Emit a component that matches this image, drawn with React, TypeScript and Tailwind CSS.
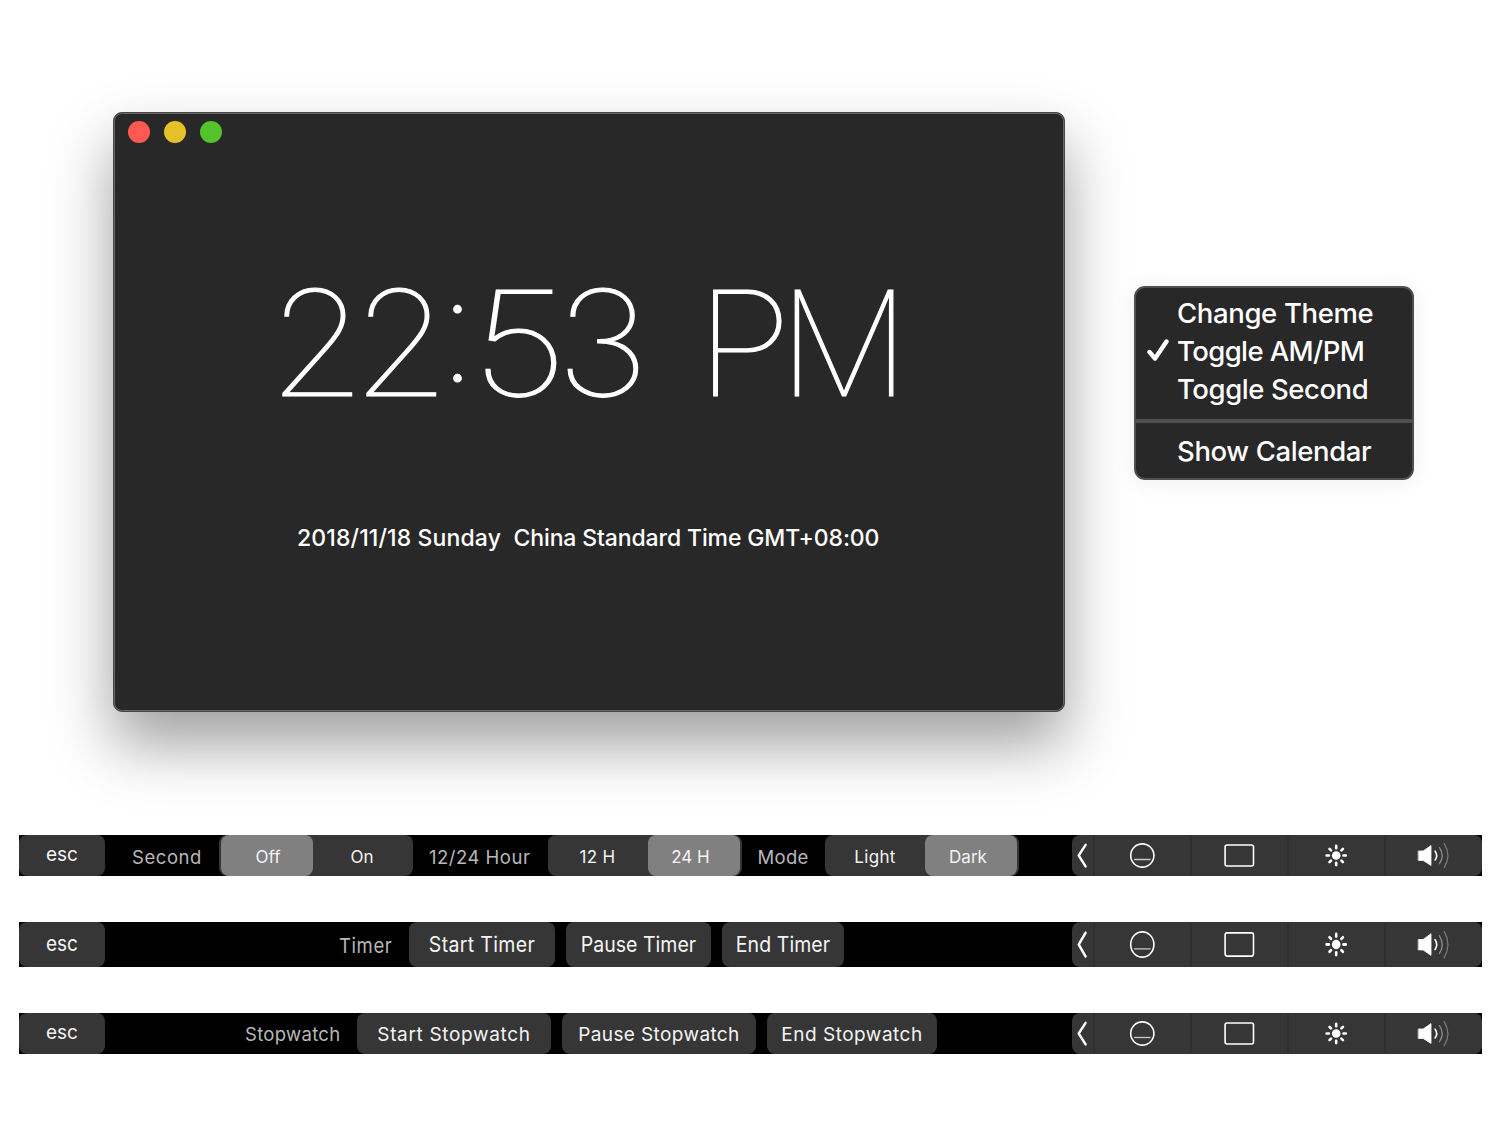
import type { ReactNode } from 'react';

function Clock() {
  return (
    <div className="ml-[161px] mt-[87.5px] flex h-[144px] items-center whitespace-pre text-[146px] font-thin leading-none text-white [-webkit-text-stroke:1.2px_white]">
      <span className="flex w-[84px] scale-x-[1.07] justify-center">2</span>
      <span className="flex w-[84px] scale-x-[1.07] justify-center">2</span>
      <span className="flex w-[29px] -translate-y-[15px] justify-center">:</span>
      <span className="flex w-[96px] scale-x-[1.17] justify-center">5</span>
      <span className="flex w-[69px] scale-x-[1.1] justify-center">3</span>
      <span className="flex w-[71px] justify-center"> </span>
      <span className="flex w-[72px] scale-x-[1.09] justify-center">P</span>
      <span className="flex w-[128px] justify-center">M</span>
    </div>
  );
}

function ClockWindow() {
  return (
    <section className="h-[600px] w-[952px] shrink-0 rounded-[9px] border border-[#484848] bg-[#282828] shadow-[inset_0_0_0_1px_#666666,0_32px_62px_rgba(0,0,0,0.38)]">
      <div className="ml-[13.5px] mt-2 flex gap-[14px]">
        <span className="size-[22px] rounded-full bg-[#ff5a52]" />
        <span className="size-[22px] rounded-full bg-[#e6c029]" />
        <span className="size-[22px] rounded-full bg-[#54c22b]" />
      </div>
      <div className="pt-[40px]">
        <Clock />
      </div>
      <div className="mt-[107.5px] flex h-8 items-center whitespace-nowrap pl-[183px] text-[23px] font-medium text-white">
        <span className="w-[216.5px] tracking-[0.12px]">2018/11/18 Sunday</span>
        <span className="tracking-[-0.12px]">China Standard Time GMT+08:00</span>
      </div>
    </section>
  );
}

function MenuItem({ children, checked }: { children: ReactNode; checked?: boolean }) {
  return (
    <div className="flex h-[38px] items-center whitespace-nowrap text-[27.5px] font-medium text-white">
      <span className="flex w-[41px] justify-start pb-[2px] pl-[11px]">
        {checked && (
          <svg width="24" height="24" viewBox="0 0 24 24" fill="none" stroke="white" strokeWidth="4.4" strokeLinecap="round" strokeLinejoin="round">
            <path d="M2.5 13 8 19.5 19.5 2.5" />
          </svg>
        )}
      </span>
      {children}
    </div>
  );
}

function ContextMenu() {
  return (
    <section className="h-[194px] w-[280px] shrink-0 rounded-[11px] border-2 border-[#505050] bg-[#282828] pt-[7px] shadow-[0_2px_22px_rgba(0,0,0,0.07)]">
      <MenuItem><span className="tracking-[-0.36px]">Change Theme</span></MenuItem>
      <MenuItem checked><span className="tracking-[-0.6px]">Toggle AM/PM</span></MenuItem>
      <MenuItem><span className="tracking-[-0.43px]">Toggle Second</span></MenuItem>
      <div className="mb-[10px] mt-[10px] h-1 bg-[#505050]" />
      <MenuItem><span className="tracking-[-0.38px]">Show Calendar</span></MenuItem>
    </section>
  );
}

function ControlStrip() {
  return (
    <div className="ml-auto flex h-full w-[410px] overflow-hidden rounded-[8px] bg-[#363636]">
      <svg className="h-full w-[21px] shrink-0" viewBox="0 0 21 41" preserveAspectRatio="none" fill="none" stroke="white" strokeWidth="2.4" strokeLinecap="round" strokeLinejoin="round">
        <path d="M13.6 9.8 6.7 20.5 13.6 31.4" />
      </svg>
      <div className="flex grow">
        <div className="w-[97px] border-l-2 border-[#2f2f2f]">
          <svg className="h-full w-[95px]" viewBox="0 0 95 41" preserveAspectRatio="none" fill="none" stroke="white">
            <circle cx="47.3" cy="20.5" r="11.6" strokeWidth="1.6" />
            <path d="M39 24.5H55.6" stroke="#c8c8c8" strokeWidth="1.3" />
          </svg>
        </div>
        <div className="w-[97px] border-l-2 border-[#2f2f2f]">
          <svg className="h-full w-[95px]" viewBox="0 0 95 41" preserveAspectRatio="none" fill="none" stroke="white">
            <rect x="33.1" y="10" width="28.4" height="21" rx="2" strokeWidth="1.6" />
          </svg>
        </div>
        <div className="w-[97px] border-l-2 border-[#2f2f2f]">
          <svg className="h-full w-[95px]" viewBox="0 0 95 41" preserveAspectRatio="none" fill="none" stroke="white" strokeWidth="2.6" strokeLinecap="round">
            <circle cx="47.2" cy="20.5" r="4.3" fill="white" stroke="none" />
            <path d="M47.2 13.2V10.9M47.2 27.8V30.1M39.9 20.5H37.6M54.5 20.5H56.8M42 15.3 40.5 13.8M52.4 15.3 53.9 13.8M42 25.7 40.5 27.2M52.4 25.7 53.9 27.2" />
          </svg>
        </div>
        <div className="grow border-l-2 border-[#2f2f2f]">
          <svg className="h-full w-[95px]" viewBox="0 0 95 41" preserveAspectRatio="none" fill="none" strokeLinecap="round">
            <path d="M32.6 16H37.1L45 10.6V30.4L37.1 25.4H32.6Z" fill="white" stroke="white" strokeWidth="0.8" strokeLinejoin="round" />
            <path d="M49.1 16.2Q52.3 20.6 49.1 25" stroke="white" strokeWidth="1.6" />
            <path d="M53.5 12.6Q58.9 20.6 53.5 28.6" stroke="#8d8d8d" strokeWidth="1.3" />
            <path d="M58.2 8.6Q65.6 20.6 58.2 32.6" stroke="#777777" strokeWidth="1.3" />
          </svg>
        </div>
      </div>
    </div>
  );
}

function TouchBar({ children, tall }: { children: ReactNode; tall?: boolean }) {
  return (
    <div className={tall ? 'flex h-[45px] w-[1463px] bg-black' : 'flex h-[41px] w-[1463px] bg-black'}>
      <div className="flex h-full w-[86px] shrink-0 items-center justify-center rounded-[8px] bg-[#363636] pb-px text-[19px] text-[#f4f4f4]">
        <span className={tall ? 'scale-y-110' : ''}>esc</span>
      </div>
      {children}
      <ControlStrip />
    </div>
  );
}

function Label({ children }: { children: ReactNode }) {
  return <div className="flex h-full items-center whitespace-nowrap pt-[3px] text-[18.5px] text-[#b8b8b8]">{children}</div>;
}

function Segments({ left, right, active }: { left: string; right: string; active: 'left' | 'right' }) {
  const on = 'flex h-full w-[92px] items-center justify-center rounded-[8px] bg-[#808080]';
  const off = 'flex h-full w-[98px] items-center justify-center';
  return (
    <div className="flex h-full w-[194px] items-stretch justify-center rounded-[8px] bg-[#363636] text-[17px] text-[#f4f4f4]">
      <div className={active === 'left' ? on : off}><span className={active === 'left' ? 'pl-[2px] pt-[4px] tracking-[0.1px]' : 'pr-[2px] pt-[4px] tracking-[0.3px]'}>{left}</span></div>
      <div className={active === 'right' ? on : off}><span className={active === 'right' ? 'pr-[6px] pt-[4px]' : 'pt-[4px]'}>{right}</span></div>
    </div>
  );
}

function Key({ children }: { children: ReactNode }) {
  return <div className="flex h-full w-full items-center justify-center whitespace-nowrap rounded-[8px] bg-[#363636] pt-px text-[#f4f4f4]">{children}</div>;
}

export default function App() {
  return (
    <main className="h-[1122px] w-[1500px] overflow-hidden bg-white font-['Inter',sans-serif]">
      <div className="flex h-[835px] items-start pl-[113px] pt-[112px]">
        <ClockWindow />
        <div className="ml-[69px] mt-[174px]"><ContextMenu /></div>
      </div>
      <div className="flex flex-col gap-[46px] pl-[19px]">
        <TouchBar>
          <div className="w-[114px] pl-[27px] pt-px"><Label><span className="tracking-[0.57px]">Second</span></Label></div>
          <Segments left="Off" right="On" active="left" />
          <div className="w-[134.5px] pl-[16px] pt-px"><Label><span className="tracking-[0.5px]">12/24 Hour</span></Label></div>
          <Segments left="12 H" right="24 H" active="right" />
          <div className="w-[83.5px] pl-[16px] pt-px"><Label><span className="tracking-[0.3px]">Mode</span></Label></div>
          <Segments left="Light" right="Dark" active="right" />
        </TouchBar>
        <TouchBar tall>
          <div className="w-[304px] pl-[234px]"><Label><span className="scale-y-110 tracking-[0.6px]">Timer</span></Label></div>
          <div className="flex gap-[11px] text-[19.5px]">
            <div className="w-[146px]"><Key><span className="scale-y-[1.08] tracking-[0.35px]">Start Timer</span></Key></div>
            <div className="w-[145px]"><Key><span className="scale-y-[1.08] tracking-[0.03px]">Pause Timer</span></Key></div>
            <div className="w-[122px]"><Key><span className="scale-y-[1.08] tracking-[0.08px]">End Timer</span></Key></div>
          </div>
        </TouchBar>
        <TouchBar>
          <div className="w-[252px] pl-[140px]"><Label><span className="tracking-[0.3px]">Stopwatch</span></Label></div>
          <div className="flex gap-[11px] text-[19px]">
            <div className="w-[194px]"><Key><span className="pt-[2px] tracking-[0.67px]">Start Stopwatch</span></Key></div>
            <div className="w-[194px]"><Key><span className="pt-[2px] tracking-[0.38px]">Pause Stopwatch</span></Key></div>
            <div className="w-[170px]"><Key><span className="pt-[2px] tracking-[0.5px]">End Stopwatch</span></Key></div>
          </div>
        </TouchBar>
      </div>
    </main>
  );
}
